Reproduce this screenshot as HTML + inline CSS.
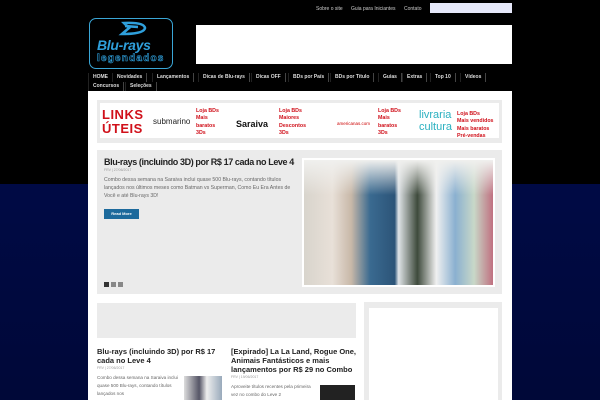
<!DOCTYPE html>
<html><head><meta charset="utf-8"><style>
*{margin:0;padding:0;box-sizing:border-box}
body{width:600px;height:400px;overflow:hidden;background:linear-gradient(#000 0,#000 184px,#000a45 184px,#000838 400px);font-family:"Liberation Sans",sans-serif;position:relative}
.a{position:absolute}
.top{top:6px;font-size:5px;color:#ccc}
.nav{left:88px;top:73px;width:424px;height:18px;background:#000;font-size:5px;font-weight:bold;color:#ddd}
.nav span{position:absolute;padding:0 4px;border-right:1px solid #444;border-left:1px solid #222;height:9px;line-height:9px}
.red{color:#d0101a;font-size:5.3px;font-weight:bold;line-height:7.3px}
.g{color:#666;font-size:5.2px;line-height:8px}
.meta{color:#999;font-size:3.5px}
</style></head><body>
<div class="a top" style="left:316px">Sobre o site</div>
<div class="a top" style="left:351px">Guia para Iniciantes</div>
<div class="a top" style="left:404px">Contato</div>
<div class="a" style="left:430px;top:3px;width:82px;height:10px;background:#e6e8fa"></div>
<div class="a" style="left:89px;top:18px;width:84px;height:51px;border:1.5px solid #3aa6d6;border-radius:7px;background:#000"></div>
<svg class="a" style="left:116px;top:21px" width="34" height="15"><path d="M8 2 Q28 1 29 7 Q28 13 6 13 L13 7 Z M9 5 L22 6" stroke="#2fa0dc" stroke-width="2.6" fill="none"/></svg>
<div class="a" style="left:97px;top:37px;font-size:14px;font-weight:bold;font-style:italic;color:#2fa0dc;letter-spacing:-0.3px">Blu-rays</div>
<div class="a" style="left:97px;top:53px;font-size:10px;font-weight:bold;color:#000;-webkit-text-stroke:0.6px #2fa0dc;letter-spacing:1.2px">legendados</div>
<div class="a" style="left:196px;top:25px;width:316px;height:39px;background:#fff"></div>
<div class="a nav">
<span style="left:0;top:0">HOME</span><span style="left:24px;top:0">Novidades</span><span style="left:64px;top:0">Lançamentos</span><span style="left:110px;top:0">Dicas de Blu-rays</span><span style="left:163px;top:0">Dicas OFF</span><span style="left:200px;top:0">BDs por País</span><span style="left:242px;top:0">BDs por Título</span><span style="left:290px;top:0">Guias</span><span style="left:314px;top:0">Extras</span><span style="left:342px;top:0">Top 10</span><span style="left:372px;top:0">Vídeos</span>
<span style="left:0;top:9px">Concursos</span><span style="left:37px;top:9px">Seleções</span></div>
<div class="a" style="left:88px;top:91px;width:424px;height:309px;background:#fff"></div>
<div class="a" style="left:97px;top:100px;width:405px;height:43px;background:#ebebeb"></div>
<div class="a" style="left:100px;top:103px;width:399px;height:35px;background:#fff"></div>
<div class="a" style="left:102px;top:108px;font-size:13px;font-weight:bold;color:#d0101a;line-height:14px;letter-spacing:.5px">LINKS<br>ÚTEIS</div>
<div class="a" style="left:153px;top:117px;font-size:8px;color:#222">submarino</div>
<div class="a red" style="left:196px;top:108px">Loja BDs<br>Mais<br>baratos<br>3Ds</div>
<div class="a" style="left:236px;top:119px;font-size:9px;font-weight:bold;color:#111">Saraiva</div>
<div class="a red" style="left:279px;top:108px">Loja BDs<br>Maiores<br>Descontos<br>3Ds</div>
<div class="a" style="left:337px;top:121px;font-size:4.5px;color:#c00">americanas.com</div>
<div class="a red" style="left:378px;top:108px">Loja BDs<br>Mais<br>baratos<br>3Ds</div>
<div class="a" style="left:419px;top:109px;font-size:11px;color:#2ab0c0;line-height:12px">livraria<br>cultura</div>
<div class="a red" style="left:457px;top:111px">Loja BDs<br>Mais vendidos<br>Mais baratos<br>Pré-vendas</div>
<div class="a" style="left:97px;top:150px;width:405px;height:144px;background:#ebebeb"></div>
<div class="a" style="left:104px;top:157px;font-size:9px;font-weight:bold;color:#222;letter-spacing:-0.4px;white-space:nowrap">Blu-rays (incluindo 3D) por R$ 17 cada no Leve 4</div>
<div class="a meta" style="left:104px;top:168px">FRV | 27/06/2017</div>
<div class="a g" style="left:104px;top:176px;width:190px">Combo dessa semana na Saraiva inclui quase 500 Blu-rays, contando títulos lançados nos últimos meses como Batman vs Superman, Como Eu Era Antes de Você e até Blu-rays 3D!</div>
<div class="a" style="left:104px;top:209px;width:35px;height:10px;background:#1d6a9c;color:#fff;font-size:4px;font-weight:bold;text-align:center;line-height:10px">Read More</div>
<div class="a" style="left:104px;top:282px;width:5px;height:5px;background:#333"></div>
<div class="a" style="left:111px;top:282px;width:5px;height:5px;background:#888"></div>
<div class="a" style="left:118px;top:282px;width:5px;height:5px;background:#888"></div>
<div class="a" style="left:302px;top:158px;width:193px;height:129px;background:#fff"></div>
<div class="a" style="left:304px;top:160px;width:189px;height:125px;background:linear-gradient(90deg,#d8d4cc 0,#e8e0d8 15%,#c8b8a8 25%,#3a6a90 35%,#2c5478 48%,#e0e4e8 50%,#3e4a3c 60%,#f0f0f0 70%,#8ab0d0 80%,#c8d8c8 90%,#c07080 100%)"></div>
<div class="a" style="left:304px;top:160px;width:189px;height:35px;background:linear-gradient(#f0f0ee,rgba(240,240,238,0))"></div>
<div class="a" style="left:97px;top:303px;width:259px;height:35px;background:#ebebeb"></div>
<div class="a" style="left:364px;top:302px;width:138px;height:98px;background:#ebebeb"></div>
<div class="a" style="left:369px;top:308px;width:129px;height:92px;background:#fff"></div>
<div class="a" style="left:97px;top:347px;font-size:7.5px;font-weight:bold;color:#222;width:120px;line-height:9px">Blu-rays (incluindo 3D) por R$ 17 cada no Leve 4</div>
<div class="a meta" style="left:97px;top:366px">FRV | 27/06/2017</div>
<div class="a g" style="left:97px;top:374px;width:82px;font-size:4.6px;line-height:8px">Combo dessa semana na Saraiva inclui quase 500 Blu-rays, contando títulos lançados nos</div>
<div class="a" style="left:184px;top:376px;width:38px;height:24px;background:linear-gradient(90deg,#ddd,#556 40%,#eee 60%,#9ab 100%)"></div>
<div class="a" style="left:231px;top:347px;font-size:7.5px;font-weight:bold;color:#222;width:130px;line-height:9px">[Expirado] La La Land, Rogue One, Animais Fantásticos e mais lançamentos por R$ 29 no Combo</div>
<div class="a meta" style="left:231px;top:375px">FRV | 19/06/2017</div>
<div class="a g" style="left:231px;top:383px;width:82px;font-size:4.6px;line-height:8px">Aproveite títulos recentes pela primeira vez no combo do Leve 2</div>
<div class="a" style="left:320px;top:385px;width:35px;height:15px;background:#222"></div>
</body></html>
